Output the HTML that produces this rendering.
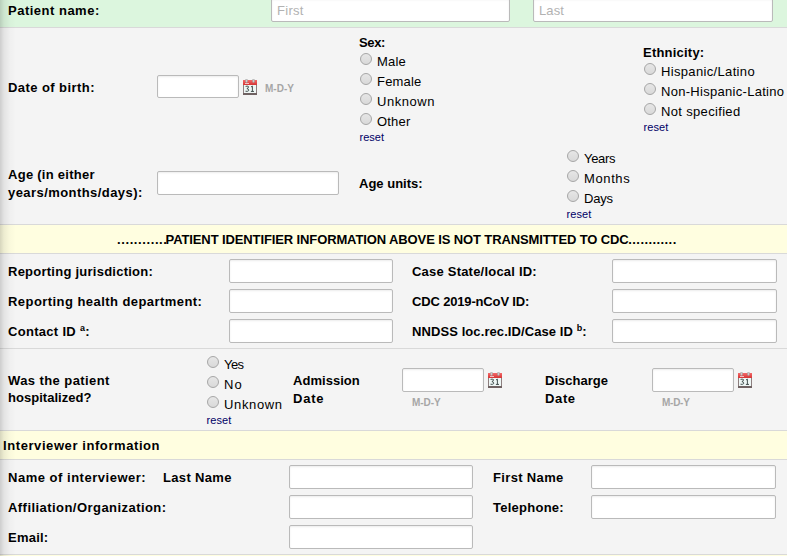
<!DOCTYPE html><html><head><meta charset="utf-8"><style>html,body{margin:0;padding:0;}
body{width:787px;height:556px;position:relative;overflow:hidden;background:#f3f3f3;font-family:"Liberation Sans",sans-serif;}
.bx{position:absolute;}
.t{position:absolute;white-space:nowrap;}
.t sup{font-size:9px;vertical-align:top;position:relative;top:-3px;font-weight:bold;}
.in{position:absolute;box-sizing:border-box;border:1px solid #bababa;border-radius:2px;background:#fff;box-shadow:inset 0 1px 2px rgba(0,0,0,0.08);}
.rd{position:absolute;box-sizing:border-box;width:12px;height:12px;border-radius:50%;border:1px solid #a6a6a6;background:linear-gradient(#e6e6e6,#d9d9d9);}
.cal{position:absolute;width:16px;height:18px;}
.cal svg{display:block;}




.shadow{position:absolute;left:0;top:0;width:16px;height:556px;background:linear-gradient(to right,rgba(0,0,0,0.16),rgba(0,0,0,0.07) 4px,rgba(0,0,0,0.02) 10px,rgba(0,0,0,0) 16px);}
</style></head><body>
<div class="bx" style="left:0px;top:0px;width:787px;height:27px;background:#dcf6de;"></div>
<div class="bx" style="left:0px;top:27px;width:787px;height:1px;background:#d9d9d9;"></div>
<div class="bx" style="left:0px;top:28px;width:787px;height:196px;background:#f4f4f4;"></div>
<div class="bx" style="left:0px;top:224px;width:787px;height:1px;background:#d9d9d9;"></div>
<div class="bx" style="left:0px;top:225px;width:787px;height:28px;background:#fffee0;"></div>
<div class="bx" style="left:0px;top:253px;width:787px;height:1px;background:#d9d9d9;"></div>
<div class="bx" style="left:0px;top:254px;width:787px;height:94px;background:#f4f4f4;"></div>
<div class="bx" style="left:0px;top:348px;width:787px;height:1px;background:#d9d9d9;"></div>
<div class="bx" style="left:0px;top:349px;width:787px;height:81px;background:#f4f4f4;"></div>
<div class="bx" style="left:0px;top:430px;width:787px;height:1px;background:#d9d9d9;"></div>
<div class="bx" style="left:0px;top:431px;width:787px;height:28px;background:#fffee0;"></div>
<div class="bx" style="left:0px;top:459px;width:787px;height:1px;background:#d9d9d9;"></div>
<div class="bx" style="left:0px;top:460px;width:787px;height:94px;background:#f4f4f4;"></div>
<div class="bx" style="left:0px;top:554px;width:787px;height:1px;background:#d9d9d9;"></div>
<div class="bx" style="left:0px;top:555px;width:787px;height:1px;background:#fffee0;"></div>
<div class="shadow"></div>
<div id="t0" class="t" style="left:8px;top:2.70px;font-size:13px;line-height:15px;color:#000;font-weight:bold;letter-spacing:0.500px;">Patient name:</div>
<div class="in" style="left:271px;top:-2px;width:239px;height:24px;"></div>
<div id="t1" class="t" style="left:277px;top:3.00px;font-size:13px;line-height:15px;color:#b2b2b2;letter-spacing:0.300px;">First</div>
<div class="in" style="left:533px;top:-2px;width:240px;height:24px;"></div>
<div id="t2" class="t" style="left:539px;top:3.00px;font-size:13px;line-height:15px;color:#b2b2b2;letter-spacing:0.134px;">Last</div>
<div id="t3" class="t" style="left:8px;top:79.50px;font-size:13px;line-height:15px;color:#000;font-weight:bold;letter-spacing:0.429px;">Date of birth:</div>
<div class="in" style="left:157px;top:75px;width:82px;height:23px;"></div>
<div class="cal" style="left:242px;top:79px;"><svg width="16" height="18" viewBox="0 0 16 18"><defs><linearGradient id="cg" x1="0" y1="0" x2="0" y2="1"><stop offset="0" stop-color="#f36b6b"/><stop offset="1" stop-color="#d63434"/></linearGradient></defs><g shape-rendering="crispEdges"><rect x="1" y="1" width="14" height="5" fill="url(#cg)"/><rect x="1" y="6" width="14" height="8" fill="#eef6f5"/><rect x="1" y="6" width="1" height="8" fill="#8d7f7f"/><rect x="14" y="6" width="1" height="8" fill="#8d7f7f"/><rect x="1" y="14" width="14" height="2" fill="#6f6262"/><rect x="3" y="4" width="4" height="1" fill="#f4c0c0"/></g><rect x="3.6" y="0" width="1.8" height="3.6" rx="0.8" fill="#d0d0d0" stroke="#9a9a9a" stroke-width="0.5"/><rect x="10.6" y="0" width="1.8" height="3.6" rx="0.8" fill="#d0d0d0" stroke="#9a9a9a" stroke-width="0.5"/><path d="M3.6,7.4 Q5.4,6.8 6.4,7.5 Q6.9,9 4.9,9.6 Q7.2,10 6.7,11.6 Q5.6,12.8 3.5,12.2 M9,8 L10.4,7.1 L10.4,12.4 M8.9,12.4 L12,12.4" fill="none" stroke="#3a4846" stroke-width="0.95"/></svg>
</div>
<div id="t4" class="t" style="left:265px;top:82.53px;font-size:10px;line-height:12px;color:#a6a6a6;font-weight:bold;letter-spacing:0.020px;">M-D-Y</div>
<div id="t5" class="t" style="left:359px;top:34.80px;font-size:13px;line-height:15px;color:#000;font-weight:bold;letter-spacing:-0.350px;">Sex:</div>
<div class="rd" style="left:360px;top:53px;"></div>
<div id="t6" class="t" style="left:377px;top:53.70px;font-size:13px;line-height:15px;color:#000;letter-spacing:0.200px;">Male</div>
<div class="rd" style="left:360px;top:73px;"></div>
<div id="t7" class="t" style="left:377px;top:73.70px;font-size:13px;line-height:15px;color:#000;letter-spacing:0.200px;">Female</div>
<div class="rd" style="left:360px;top:93px;"></div>
<div id="t8" class="t" style="left:377px;top:93.70px;font-size:13px;line-height:15px;color:#000;letter-spacing:0.541px;">Unknown</div>
<div class="rd" style="left:360px;top:113px;"></div>
<div id="t9" class="t" style="left:377px;top:113.70px;font-size:13px;line-height:15px;color:#000;letter-spacing:0.200px;">Other</div>
<div id="t10" class="t" style="left:359.5px;top:130.69px;font-size:11px;line-height:13px;color:#000066;letter-spacing:0.020px;">reset</div>
<div id="t11" class="t" style="left:643px;top:45.00px;font-size:13px;line-height:15px;color:#000;font-weight:bold;letter-spacing:0.216px;">Ethnicity:</div>
<div class="rd" style="left:644px;top:63px;"></div>
<div id="t12" class="t" style="left:661px;top:63.90px;font-size:13px;line-height:15px;color:#000;letter-spacing:0.340px;">Hispanic/Latino</div>
<div class="rd" style="left:644px;top:83px;"></div>
<div id="t13" class="t" style="left:661px;top:83.90px;font-size:13px;line-height:15px;color:#000;letter-spacing:0.292px;">Non-Hispanic-Latino</div>
<div class="rd" style="left:644px;top:103px;"></div>
<div id="t14" class="t" style="left:661px;top:103.90px;font-size:13px;line-height:15px;color:#000;letter-spacing:0.333px;">Not specified</div>
<div id="t15" class="t" style="left:643.5px;top:120.89px;font-size:11px;line-height:13px;color:#000066;letter-spacing:0.100px;">reset</div>
<div id="t16" class="t" style="left:8px;top:167.10px;font-size:13px;line-height:15px;color:#000;font-weight:bold;letter-spacing:0.273px;">Age (in either</div>
<div id="t17" class="t" style="left:8px;top:184.60px;font-size:13px;line-height:15px;color:#000;font-weight:bold;letter-spacing:0.433px;">years/months/days):</div>
<div class="in" style="left:157px;top:171px;width:182px;height:24px;"></div>
<div id="t18" class="t" style="left:359px;top:176.40px;font-size:13px;line-height:15px;color:#000;font-weight:bold;letter-spacing:0.012px;">Age units:</div>
<div class="rd" style="left:567px;top:150px;"></div>
<div id="t19" class="t" style="left:584px;top:151.00px;font-size:13px;line-height:15px;color:#000;letter-spacing:-0.320px;">Years</div>
<div class="rd" style="left:567px;top:170px;"></div>
<div id="t20" class="t" style="left:584px;top:171.00px;font-size:13px;line-height:15px;color:#000;letter-spacing:0.616px;">Months</div>
<div class="rd" style="left:567px;top:190px;"></div>
<div id="t21" class="t" style="left:584px;top:191.00px;font-size:13px;line-height:15px;color:#000;letter-spacing:-0.177px;">Days</div>
<div id="t22" class="t" style="left:566.5px;top:208.19px;font-size:11px;line-height:13px;color:#000066;letter-spacing:0.100px;">reset</div>
<div id="t23" class="t" style="left:117px;top:232.00px;font-size:13px;line-height:15px;color:#000;font-weight:bold;letter-spacing:0.600px;">............</div>
<div id="t24" class="t" style="left:165.6px;top:232.00px;font-size:13px;line-height:15px;color:#000;font-weight:bold;letter-spacing:-0.115px;">PATIENT IDENTIFIER INFORMATION ABOVE IS NOT TRANSMITTED TO CDC</div>
<div id="t25" class="t" style="left:628.3px;top:232.00px;font-size:13px;line-height:15px;color:#000;font-weight:bold;letter-spacing:0.420px;">............</div>
<div id="t26" class="t" style="left:8px;top:263.70px;font-size:13px;line-height:15px;color:#000;font-weight:bold;letter-spacing:0.247px;">Reporting jurisdiction:</div>
<div class="in" style="left:229px;top:259px;width:164px;height:24px;"></div>
<div id="t27" class="t" style="left:412px;top:263.70px;font-size:13px;line-height:15px;color:#000;font-weight:bold;letter-spacing:0.211px;">Case State/local ID:</div>
<div class="in" style="left:612px;top:259px;width:165px;height:24px;"></div>
<div id="t28" class="t" style="left:8px;top:293.70px;font-size:13px;line-height:15px;color:#000;font-weight:bold;letter-spacing:0.442px;">Reporting health department:</div>
<div class="in" style="left:229px;top:289px;width:164px;height:24px;"></div>
<div id="t29" class="t" style="left:412px;top:293.70px;font-size:13px;line-height:15px;color:#000;font-weight:bold;letter-spacing:-0.160px;">CDC 2019-nCoV ID:</div>
<div class="in" style="left:612px;top:289px;width:165px;height:24px;"></div>
<div id="t30" class="t" style="left:8px;top:323.70px;font-size:13px;line-height:15px;color:#000;font-weight:bold;letter-spacing:0.300px;">Contact ID <sup>a</sup>:</div>
<div class="in" style="left:229px;top:319px;width:164px;height:24px;"></div>
<div id="t31" class="t" style="left:412px;top:323.70px;font-size:13px;line-height:15px;color:#000;font-weight:bold;letter-spacing:0.087px;">NNDSS loc.rec.ID/Case ID <sup>b</sup>:</div>
<div class="in" style="left:612px;top:319px;width:165px;height:24px;"></div>
<div id="t32" class="t" style="left:8px;top:372.50px;font-size:13px;line-height:15px;color:#000;font-weight:bold;letter-spacing:0.414px;">Was the patient</div>
<div id="t33" class="t" style="left:8px;top:390.20px;font-size:13px;line-height:15px;color:#000;font-weight:bold;letter-spacing:0.026px;">hospitalized?</div>
<div class="rd" style="left:207px;top:356px;"></div>
<div id="t34" class="t" style="left:224px;top:356.70px;font-size:13px;line-height:15px;color:#000;letter-spacing:-0.600px;">Yes</div>
<div class="rd" style="left:207px;top:376px;"></div>
<div id="t35" class="t" style="left:224px;top:376.70px;font-size:13px;line-height:15px;color:#000;letter-spacing:1.000px;">No</div>
<div class="rd" style="left:207px;top:396px;"></div>
<div id="t36" class="t" style="left:224px;top:396.70px;font-size:13px;line-height:15px;color:#000;letter-spacing:0.650px;">Unknown</div>
<div id="t37" class="t" style="left:206.5px;top:414.19px;font-size:11px;line-height:13px;color:#000066;letter-spacing:0.100px;">reset</div>
<div id="t38" class="t" style="left:293px;top:373.40px;font-size:13px;line-height:15px;color:#000;font-weight:bold;letter-spacing:0.040px;">Admission</div>
<div id="t39" class="t" style="left:293px;top:391.30px;font-size:13px;line-height:15px;color:#000;font-weight:bold;letter-spacing:0.786px;">Date</div>
<div class="in" style="left:402px;top:368px;width:82px;height:24px;"></div>
<div class="cal" style="left:487px;top:372px;"><svg width="16" height="18" viewBox="0 0 16 18"><defs><linearGradient id="cg" x1="0" y1="0" x2="0" y2="1"><stop offset="0" stop-color="#f36b6b"/><stop offset="1" stop-color="#d63434"/></linearGradient></defs><g shape-rendering="crispEdges"><rect x="1" y="1" width="14" height="5" fill="url(#cg)"/><rect x="1" y="6" width="14" height="8" fill="#eef6f5"/><rect x="1" y="6" width="1" height="8" fill="#8d7f7f"/><rect x="14" y="6" width="1" height="8" fill="#8d7f7f"/><rect x="1" y="14" width="14" height="2" fill="#6f6262"/><rect x="3" y="4" width="4" height="1" fill="#f4c0c0"/></g><rect x="3.6" y="0" width="1.8" height="3.6" rx="0.8" fill="#d0d0d0" stroke="#9a9a9a" stroke-width="0.5"/><rect x="10.6" y="0" width="1.8" height="3.6" rx="0.8" fill="#d0d0d0" stroke="#9a9a9a" stroke-width="0.5"/><path d="M3.6,7.4 Q5.4,6.8 6.4,7.5 Q6.9,9 4.9,9.6 Q7.2,10 6.7,11.6 Q5.6,12.8 3.5,12.2 M9,8 L10.4,7.1 L10.4,12.4 M8.9,12.4 L12,12.4" fill="none" stroke="#3a4846" stroke-width="0.95"/></svg>
</div>
<div id="t40" class="t" style="left:412px;top:397.14px;font-size:10px;line-height:12px;color:#a6a6a6;font-weight:bold;letter-spacing:-0.060px;">M-D-Y</div>
<div id="t41" class="t" style="left:545px;top:373.20px;font-size:13px;line-height:15px;color:#000;font-weight:bold;letter-spacing:0.000px;">Discharge</div>
<div id="t42" class="t" style="left:545px;top:391.20px;font-size:13px;line-height:15px;color:#000;font-weight:bold;letter-spacing:0.629px;">Date</div>
<div class="in" style="left:652px;top:368px;width:82px;height:24px;"></div>
<div class="cal" style="left:737px;top:372px;"><svg width="16" height="18" viewBox="0 0 16 18"><defs><linearGradient id="cg" x1="0" y1="0" x2="0" y2="1"><stop offset="0" stop-color="#f36b6b"/><stop offset="1" stop-color="#d63434"/></linearGradient></defs><g shape-rendering="crispEdges"><rect x="1" y="1" width="14" height="5" fill="url(#cg)"/><rect x="1" y="6" width="14" height="8" fill="#eef6f5"/><rect x="1" y="6" width="1" height="8" fill="#8d7f7f"/><rect x="14" y="6" width="1" height="8" fill="#8d7f7f"/><rect x="1" y="14" width="14" height="2" fill="#6f6262"/><rect x="3" y="4" width="4" height="1" fill="#f4c0c0"/></g><rect x="3.6" y="0" width="1.8" height="3.6" rx="0.8" fill="#d0d0d0" stroke="#9a9a9a" stroke-width="0.5"/><rect x="10.6" y="0" width="1.8" height="3.6" rx="0.8" fill="#d0d0d0" stroke="#9a9a9a" stroke-width="0.5"/><path d="M3.6,7.4 Q5.4,6.8 6.4,7.5 Q6.9,9 4.9,9.6 Q7.2,10 6.7,11.6 Q5.6,12.8 3.5,12.2 M9,8 L10.4,7.1 L10.4,12.4 M8.9,12.4 L12,12.4" fill="none" stroke="#3a4846" stroke-width="0.95"/></svg>
</div>
<div id="t43" class="t" style="left:662px;top:397.14px;font-size:10px;line-height:12px;color:#a6a6a6;font-weight:bold;letter-spacing:-0.260px;">M-D-Y</div>
<div id="t44" class="t" style="left:3px;top:437.80px;font-size:13px;line-height:15px;color:#000;font-weight:bold;letter-spacing:0.582px;">Interviewer information</div>
<div id="t45" class="t" style="left:8px;top:469.80px;font-size:13px;line-height:15px;color:#000;font-weight:bold;letter-spacing:0.516px;">Name of interviewer:</div>
<div id="t46" class="t" style="left:163px;top:469.80px;font-size:13px;line-height:15px;color:#000;font-weight:bold;letter-spacing:0.340px;">Last Name</div>
<div class="in" style="left:289px;top:465px;width:184px;height:24px;"></div>
<div id="t47" class="t" style="left:493px;top:470.00px;font-size:13px;line-height:15px;color:#000;font-weight:bold;letter-spacing:0.342px;">First Name</div>
<div class="in" style="left:591px;top:465px;width:185px;height:24px;"></div>
<div id="t48" class="t" style="left:8px;top:499.80px;font-size:13px;line-height:15px;color:#000;font-weight:bold;letter-spacing:0.448px;">Affiliation/Organization:</div>
<div class="in" style="left:289px;top:495px;width:184px;height:24px;"></div>
<div id="t49" class="t" style="left:493px;top:500.20px;font-size:13px;line-height:15px;color:#000;font-weight:bold;letter-spacing:0.253px;">Telephone:</div>
<div class="in" style="left:591px;top:495px;width:185px;height:24px;"></div>
<div id="t50" class="t" style="left:8px;top:530.00px;font-size:13px;line-height:15px;color:#000;font-weight:bold;letter-spacing:0.236px;">Email:</div>
<div class="in" style="left:289px;top:525px;width:184px;height:24px;"></div>
</body></html>
